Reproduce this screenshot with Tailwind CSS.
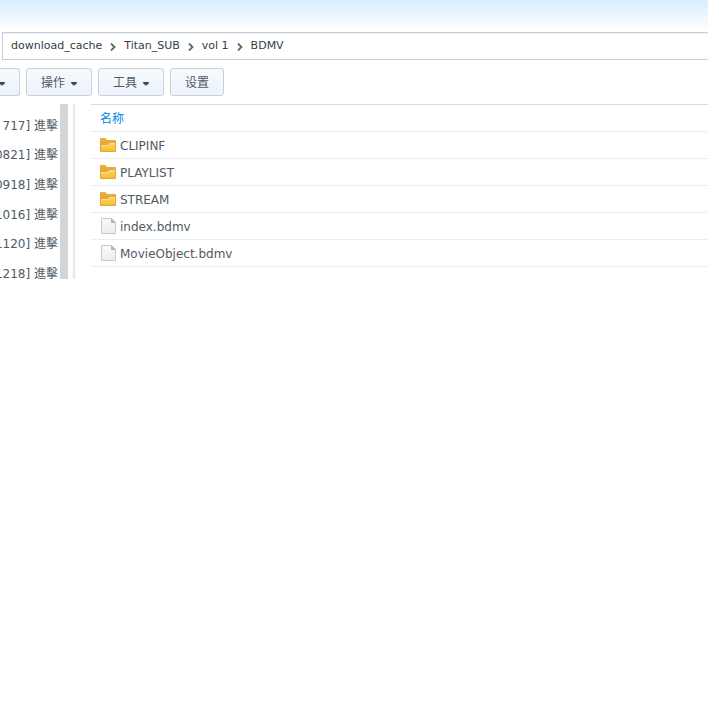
<!DOCTYPE html>
<html lang="zh-CN">
<head>
    <meta charset="UTF-8">
    <meta name="viewport" content="width=device-width, initial-scale=1.0">
    <title>File Station</title>
    <script src="https://cdn.jsdelivr.net/npm/@tailwindcss/browser@4"></script>
</head>
<body class="bg-white font-['DejaVu_Sans','Noto_Sans_CJK_SC',sans-serif] text-xs text-[#505a64]">
    <svg class="absolute size-0">
        <defs>
            <linearGradient id="folder-back" x1="0" y1="0" x2="0" y2="1">
                <stop offset="0" stop-color="#eeb044"/>
                <stop offset="1" stop-color="#dc9a28"/>
            </linearGradient>
            <linearGradient id="folder-front" x1="0" y1="0" x2="0" y2="1">
                <stop offset="0" stop-color="#fbd673"/>
                <stop offset="1" stop-color="#f6bd2c"/>
            </linearGradient>
            <linearGradient id="page-fill" x1="0" y1="0" x2="0" y2="1">
                <stop offset="0" stop-color="#fafafa"/>
                <stop offset="1" stop-color="#ececec"/>
            </linearGradient>
        </defs>
        <symbol id="icon-folder" viewBox="0 0 16 16">
            <path d="M0 1.500Q0 1 .5 1H5.500L7 3H15.500Q16 3 16 3.500V14H0Z" fill="url(#folder-back)"/>
            <path d="M.5 7.500H7.500L9.500 5.500H15.500V14.500H.5Z" fill="url(#folder-front)" stroke="#e2a632"/>
            <path d="M1 8.500H8L10 6.500H15" fill="none" stroke="#fde29a"/>
        </symbol>
        <symbol id="icon-file" viewBox="0 0 16 16">
            <path d="M1.500 .5H11.500L15.500 4.500V15.500H1.500Z" fill="url(#page-fill)" stroke="#cbcbcb"/>
            <path d="M11 0L16 5H11Z" fill="#b4b4b4"/>
        </symbol>
        <symbol id="icon-chevron" viewBox="0 0 6 8">
            <path d="M1 .5L4.500 4L1 7.500" fill="none" stroke="#5a646e" stroke-width="1.800"/>
        </symbol>
        <symbol id="icon-caret" viewBox="0 0 6 4">
            <path d="M0 0H6V1L3.500 3.500H2.500L0 1Z" fill="#414b55"/>
        </symbol>
    </svg>

    <div class="mr-[11px] overflow-hidden">
        <header class="h-8 bg-linear-to-b from-[#d8eeff] to-white"></header>

        <nav class="ml-0.5 flex h-7 items-center gap-2 border-y border-l border-[#c3cfdd] pt-px pl-2 text-[11px] text-[#323c46] shadow-[inset_0_1px_0_#edf1f5]">
            <a href="#">download_cache</a>
            <svg class="h-2 w-1.5"><use href="#icon-chevron"/></svg>
            <a href="#">Titan_SUB</a>
            <svg class="h-2 w-1.5"><use href="#icon-chevron"/></svg>
            <a href="#">vol 1</a>
            <svg class="h-2 w-1.5"><use href="#icon-chevron"/></svg>
            <a href="#">BDMV</a>
        </nav>

        <div class="flex gap-1.5 py-2">
            <button aria-label="新增" class="flex h-7 w-5 shrink-0 items-center rounded-r-[3px] border border-l-0 border-[#c6d1df] bg-linear-to-b from-[#f5faff] to-[#eef3f9] pt-0.5">
                <svg class="mt-0.5 -ml-px h-1 w-1.5"><use href="#icon-caret"/></svg>
            </button>
            <button class="flex h-7 w-[66px] shrink-0 items-center justify-center gap-1.5 rounded-[3px] border border-[#c6d1df] bg-linear-to-b from-[#f5faff] to-[#eef3f9] pt-0.5">
                操作
                <svg class="mt-0.5 h-1 w-1.5"><use href="#icon-caret"/></svg>
            </button>
            <button class="flex h-7 w-[66px] shrink-0 items-center justify-center gap-1.5 rounded-[3px] border border-[#c6d1df] bg-linear-to-b from-[#f5faff] to-[#eef3f9] pt-0.5">
                工具
                <svg class="mt-0.5 h-1 w-1.5"><use href="#icon-caret"/></svg>
            </button>
            <button class="h-7 w-[54px] shrink-0 rounded-[3px] border border-[#c6d1df] bg-linear-to-b from-[#f5faff] to-[#eef3f9] pt-0.5">设置</button>
        </div>

        <main class="flex h-[175px]">
            <aside class="flex w-[75px] shrink-0 overflow-hidden">
                <ul class="mt-[7px] grid h-[178px] w-[58px] shrink-0 grid-rows-6 items-center justify-end overflow-hidden whitespace-nowrap">
                    <li class="text-right">717] 進擊</li>
                    <li class="text-right">0821] 進擊</li>
                    <li class="text-right">0918] 進擊</li>
                    <li class="text-right">1016] 進擊</li>
                    <li class="text-right">1120] 進擊</li>
                    <li class="text-right">1218] 進擊</li>
                </ul>
                <div class="ml-0.5 w-2 bg-[#d3d5d7]"></div>
                <div class="ml-auto w-[3px] bg-linear-to-r from-white to-[#dcdcdc]"></div>
            </aside>

            <table class="ml-4 w-full self-start border-t border-[#d0deeb]">
                <thead>
                    <tr class="h-[27px] border-b border-[#e9eef2]">
                        <th class="pt-0.5 pl-[9px] text-left font-normal text-[#0086e5]">名称</th>
                    </tr>
                </thead>
                <tbody>
                    <tr class="h-[27px] border-b border-[#e9eef2]">
                        <td class="pl-[9px]"><div class="flex items-center gap-1"><svg class="size-4"><use href="#icon-folder"/></svg><span class="pt-0.5">CLIPINF</span></div></td>
                    </tr>
                    <tr class="h-[27px] border-b border-[#e9eef2]">
                        <td class="pl-[9px]"><div class="flex items-center gap-1"><svg class="size-4"><use href="#icon-folder"/></svg><span class="pt-0.5">PLAYLIST</span></div></td>
                    </tr>
                    <tr class="h-[27px] border-b border-[#e9eef2]">
                        <td class="pl-[9px]"><div class="flex items-center gap-1"><svg class="size-4"><use href="#icon-folder"/></svg><span class="pt-0.5">STREAM</span></div></td>
                    </tr>
                    <tr class="h-[27px] border-b border-[#e9eef2]">
                        <td class="pl-[9px]"><div class="flex items-center gap-1"><svg class="size-4"><use href="#icon-file"/></svg><span class="pt-0.5">index.bdmv</span></div></td>
                    </tr>
                    <tr class="h-[27px] border-b border-[#e9eef2]">
                        <td class="pl-[9px]"><div class="flex items-center gap-1"><svg class="size-4"><use href="#icon-file"/></svg><span class="pt-0.5">MovieObject.bdmv</span></div></td>
                    </tr>
                </tbody>
            </table>
        </main>
    </div>
</body>
</html>
